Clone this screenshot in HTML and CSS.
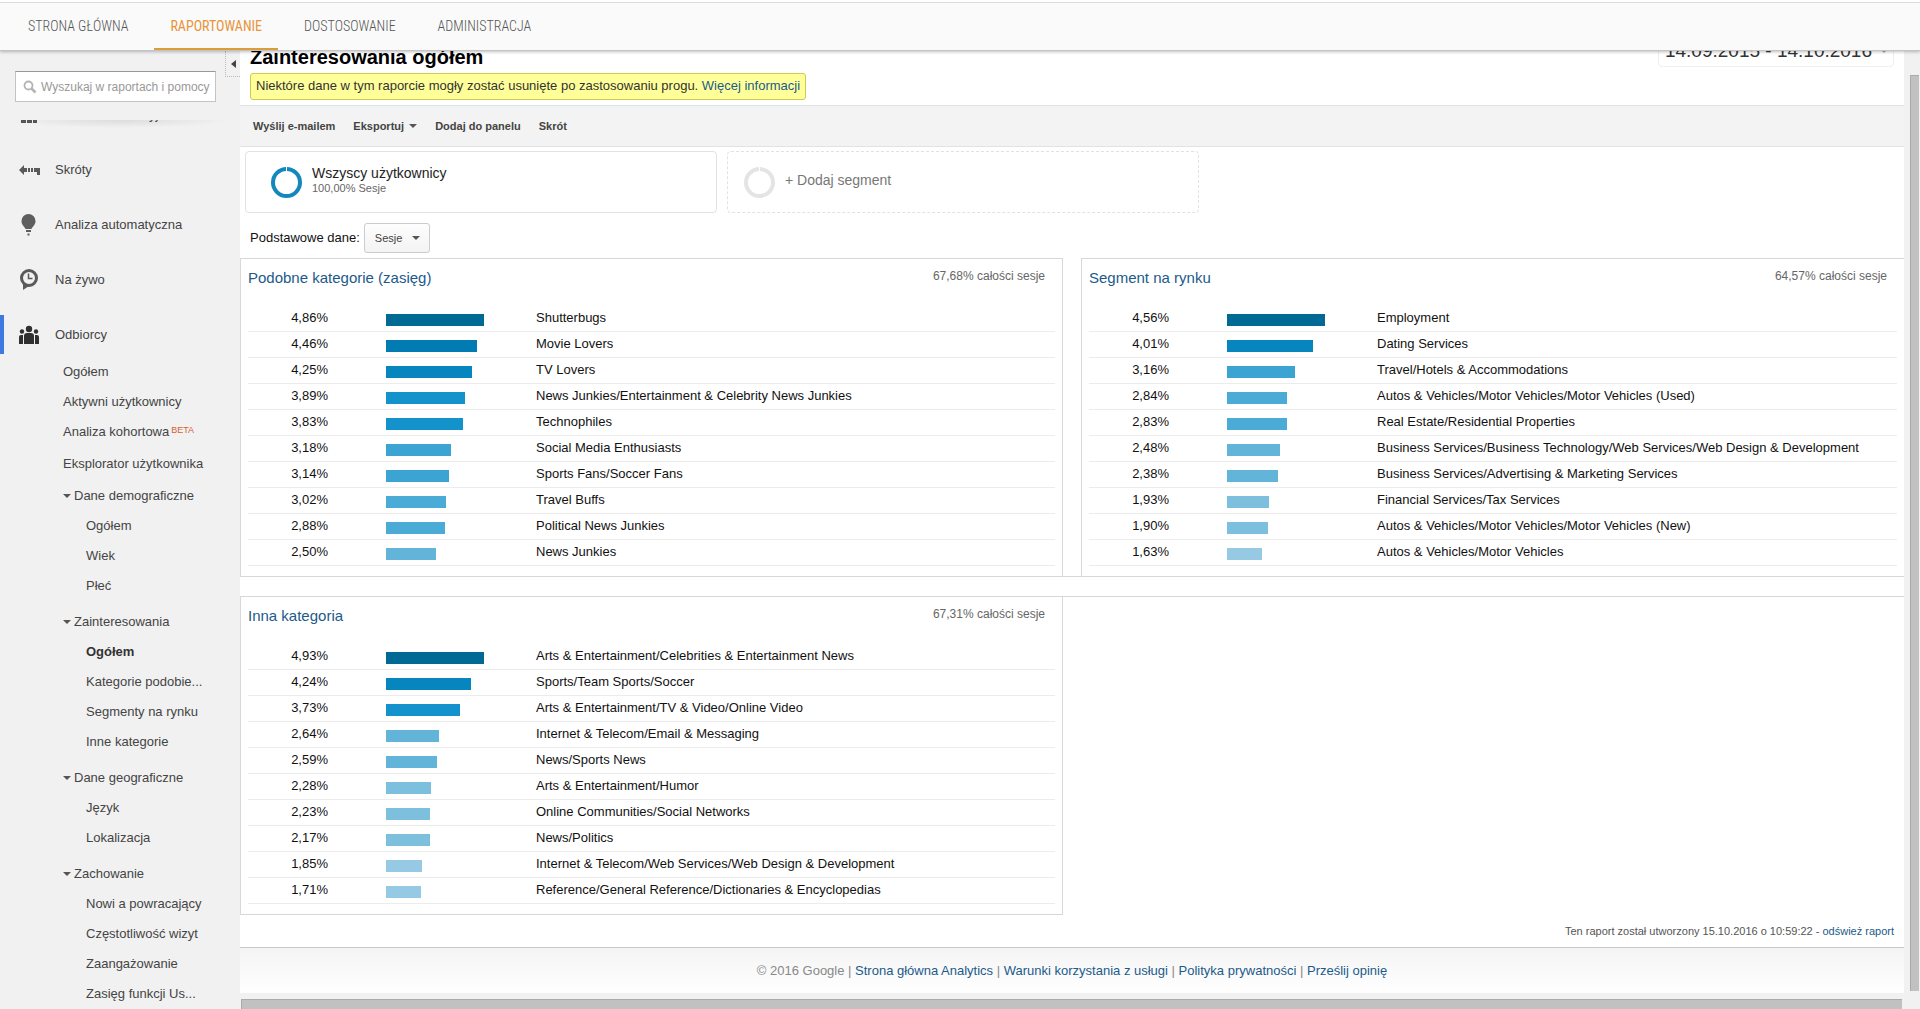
FILE: index.html
```html
<!DOCTYPE html>
<html lang="pl">
<head>
<meta charset="utf-8">
<title>Zainteresowania ogółem</title>
<link rel="stylesheet" href="styles.css">
</head>
<body>
<div class="app">
  <header class="topbar">
    <nav class="tabs">
      <a class="tab" href="#">STRONA GŁÓWNA</a>
      <a class="tab tab-active" href="#">RAPORTOWANIE</a>
      <a class="tab" href="#">DOSTOSOWANIE</a>
      <a class="tab" href="#">ADMINISTRACJA</a>
    </nav>
  </header>
  <div class="body">
    <aside class="sidebar">
      <button class="collapse" type="button" aria-label="Zwiń menu"><svg width="5" height="8" viewBox="0 0 5 8"><path d="M5 0v8L0 4z" fill="#444"/></svg></button>
      <label class="search">
        <svg width="14" height="14" viewBox="0 0 14 14" fill="none" stroke="#b4b4b4"><circle cx="5.500" cy="5.500" r="4" stroke-width="1.800"/><path d="M8.500 8.500l4 4" stroke-width="2.500"/></svg>
        <input type="text" placeholder="Wyszukaj w raportach i pomocy" aria-label="Wyszukaj w raportach i pomocy">
      </label>
      <nav class="menu">
        <a class="item" href="#"><svg width="22" height="20" viewBox="0 0 22 20" fill="#555"><path d="M2 2h5v4H2zM8 2h5v4H8zM14 2h4v4h-4zM2 8h5v4H2zM8 8h5v4H8zM14 8h4v4h-4zM2 14h5v4H2zM8 14h5v4H8zM14 14h4v4h-4z"/></svg>Panele informacyjne</a>
        <a class="item" href="#"><svg width="22" height="20" viewBox="0 0 22 20" fill="#5a5a5a"><path d="M0 10l5-5v3h3v4H5v3zM9 8h2v4H9zM12 8h2v4h-2zM15 8h6v7h-3v-3h-3z"/></svg>Skróty</a>
        <a class="item" href="#"><svg width="22" height="22" viewBox="0 0 22 22" fill="#5e5e5e"><path d="M9.500 0a7 7 0 0 1 7 7c0 4-3 5.500-4 8h-6c-1-2.500-4-4-4-8a7 7 0 0 1 7-7zM7 16h5v2H7zM8.500 19.500h2v2h-2z"/></svg>Analiza automatyczna</a>
        <a class="item" href="#"><svg width="22" height="22" viewBox="0 0 22 22"><path d="M4 14v7l6-4" fill="#5a5a5a"/><circle cx="10" cy="9" r="7.500" fill="#f1f1f1" stroke="#5a5a5a" stroke-width="3"/><path d="M9.500 4.500v5h4" fill="none" stroke="#5a5a5a" stroke-width="1.500"/></svg>Na żywo</a>
        <a class="item item-open" href="#"><svg width="22" height="20" viewBox="0 0 22 20" fill="#303030"><circle cx="10" cy="4" r="3.200"/><circle cx="3" cy="6.500" r="2.200"/><circle cx="17" cy="6.500" r="2.200"/><path d="M5 19v-8q0-3 3-3h4q3 0 3 3v8zM0 19v-7q0-2 2-2h2v9zM20 19v-7q0-2-2-2h-2v9z"/></svg>Odbiorcy</a>
        <ul class="sub">
          <li><a href="#">Ogółem</a></li>
          <li><a href="#">Aktywni użytkownicy</a></li>
          <li><a href="#">Analiza kohortowa<span class="beta">BETA</span></a></li>
          <li class="spaced"><a href="#">Eksplorator użytkownika</a></li>
        </ul>
        <a class="group group-near" href="#">Dane demograficzne</a>
        <ul class="sub leaf">
          <li><a href="#">Ogółem</a></li>
          <li><a href="#">Wiek</a></li>
          <li><a href="#">Płeć</a></li>
        </ul>
        <a class="group" href="#">Zainteresowania</a>
        <ul class="sub leaf">
          <li><a class="current" href="#">Ogółem</a></li>
          <li><a href="#">Kategorie podobie...</a></li>
          <li><a href="#">Segmenty na rynku</a></li>
          <li><a href="#">Inne kategorie</a></li>
        </ul>
        <a class="group" href="#">Dane geograficzne</a>
        <ul class="sub leaf">
          <li><a href="#">Język</a></li>
          <li><a href="#">Lokalizacja</a></li>
        </ul>
        <a class="group" href="#">Zachowanie</a>
        <ul class="sub leaf">
          <li><a href="#">Nowi a powracający</a></li>
          <li><a href="#">Częstotliwość wizyt</a></li>
          <li><a href="#">Zaangażowanie</a></li>
          <li><a href="#">Zasięg funkcji Us...</a></li>
        </ul>
      </nav>
    </aside>

    <div class="scroller">
      <main class="report">
        <div class="heading">
          <h1>Zainteresowania ogółem</h1>
          <button class="dates" type="button"><span>14.09.2015 - 14.10.2016</span><i class="caret"></i></button>
        </div>
        <p class="notice">Niektóre dane w tym raporcie mogły zostać usunięte po zastosowaniu progu. <a href="#">Więcej informacji</a></p>
        <div class="toolbar">
          <button type="button">Wyślij e-mailem</button>
          <button type="button">Eksportuj <i class="caret"></i></button>
          <button type="button">Dodaj do panelu</button>
          <button type="button">Skrót</button>
        </div>
        <div class="segments">
          <button class="segment" type="button">
            <svg width="31" height="31" viewBox="0 0 31 31"><circle cx="15.500" cy="15.500" r="13.500" fill="none" stroke="#1488bb" stroke-width="4"/><path d="M15.500 0v5" stroke="#fff"/></svg>
            <span class="segment-text"><span class="segment-name">Wszyscy użytkownicy</span><small>100,00% Sesje</small></span>
          </button>
          <button class="segment segment-add" type="button">
            <svg width="31" height="31" viewBox="0 0 31 31"><circle cx="15.500" cy="15.500" r="13.500" fill="none" stroke="#e4e4e4" stroke-width="4"/><path d="M15.500 0v5" stroke="#fff"/></svg>
            <span class="segment-text">+ Dodaj segment</span>
          </button>
        </div>
        <div class="metric">
          <label for="metric">Podstawowe dane:</label>
          <span class="picker"><select id="metric"><option>Sesje</option></select><i class="caret"></i></span>
        </div>

        <div class="panels panels-top">
          <section class="panel">
            <div class="panel-head"><h2><a href="#">Podobne kategorie (zasięg)</a></h2><span>67,68% całości sesje</span></div>
            <table>
              <tr><td>4,86%</td><td><div class="bar s1" style="width:98px"></div></td><td>Shutterbugs</td></tr>
              <tr><td>4,46%</td><td><div class="bar s2" style="width:91px"></div></td><td>Movie Lovers</td></tr>
              <tr><td>4,25%</td><td><div class="bar s3" style="width:86px"></div></td><td>TV Lovers</td></tr>
              <tr><td>3,89%</td><td><div class="bar s4" style="width:79px"></div></td><td>News Junkies/Entertainment &amp; Celebrity News Junkies</td></tr>
              <tr><td>3,83%</td><td><div class="bar s4" style="width:77px"></div></td><td>Technophiles</td></tr>
              <tr><td>3,18%</td><td><div class="bar s5" style="width:65px"></div></td><td>Social Media Enthusiasts</td></tr>
              <tr><td>3,14%</td><td><div class="bar s5" style="width:63px"></div></td><td>Sports Fans/Soccer Fans</td></tr>
              <tr><td>3,02%</td><td><div class="bar s6" style="width:60px"></div></td><td>Travel Buffs</td></tr>
              <tr><td>2,88%</td><td><div class="bar s6" style="width:59px"></div></td><td>Political News Junkies</td></tr>
              <tr><td>2,50%</td><td><div class="bar s7" style="width:50px"></div></td><td>News Junkies</td></tr>
            </table>
          </section>
          <section class="panel panel-edge">
            <div class="panel-head"><h2><a href="#">Segment na rynku</a></h2><span>64,57% całości sesje</span></div>
            <table>
              <tr><td>4,56%</td><td><div class="bar s1" style="width:98px"></div></td><td>Employment</td></tr>
              <tr><td>4,01%</td><td><div class="bar s3" style="width:86px"></div></td><td>Dating Services</td></tr>
              <tr><td>3,16%</td><td><div class="bar s5" style="width:68px"></div></td><td>Travel/Hotels &amp; Accommodations</td></tr>
              <tr><td>2,84%</td><td><div class="bar s6" style="width:60px"></div></td><td>Autos &amp; Vehicles/Motor Vehicles/Motor Vehicles (Used)</td></tr>
              <tr><td>2,83%</td><td><div class="bar s6" style="width:60px"></div></td><td>Real Estate/Residential Properties</td></tr>
              <tr><td>2,48%</td><td><div class="bar s7" style="width:53px"></div></td><td>Business Services/Business Technology/Web Services/Web Design &amp; Development</td></tr>
              <tr><td>2,38%</td><td><div class="bar s7" style="width:51px"></div></td><td>Business Services/Advertising &amp; Marketing Services</td></tr>
              <tr><td>1,93%</td><td><div class="bar s8" style="width:42px"></div></td><td>Financial Services/Tax Services</td></tr>
              <tr><td>1,90%</td><td><div class="bar s8" style="width:41px"></div></td><td>Autos &amp; Vehicles/Motor Vehicles/Motor Vehicles (New)</td></tr>
              <tr><td>1,63%</td><td><div class="bar s9" style="width:35px"></div></td><td>Autos &amp; Vehicles/Motor Vehicles</td></tr>
            </table>
          </section>
        </div>
        <div class="panels panels-bottom">
          <section class="panel panel-closed">
            <div class="panel-head"><h2><a href="#">Inna kategoria</a></h2><span>67,31% całości sesje</span></div>
            <table>
              <tr><td>4,93%</td><td><div class="bar s1" style="width:98px"></div></td><td>Arts &amp; Entertainment/Celebrities &amp; Entertainment News</td></tr>
              <tr><td>4,24%</td><td><div class="bar s3" style="width:85px"></div></td><td>Sports/Team Sports/Soccer</td></tr>
              <tr><td>3,73%</td><td><div class="bar s4" style="width:74px"></div></td><td>Arts &amp; Entertainment/TV &amp; Video/Online Video</td></tr>
              <tr><td>2,64%</td><td><div class="bar s7" style="width:53px"></div></td><td>Internet &amp; Telecom/Email &amp; Messaging</td></tr>
              <tr><td>2,59%</td><td><div class="bar s7" style="width:51px"></div></td><td>News/Sports News</td></tr>
              <tr><td>2,28%</td><td><div class="bar s8" style="width:45px"></div></td><td>Arts &amp; Entertainment/Humor</td></tr>
              <tr><td>2,23%</td><td><div class="bar s8" style="width:44px"></div></td><td>Online Communities/Social Networks</td></tr>
              <tr><td>2,17%</td><td><div class="bar s8" style="width:44px"></div></td><td>News/Politics</td></tr>
              <tr><td>1,85%</td><td><div class="bar s9" style="width:36px"></div></td><td>Internet &amp; Telecom/Web Services/Web Design &amp; Development</td></tr>
              <tr><td>1,71%</td><td><div class="bar s9" style="width:35px"></div></td><td>Reference/General Reference/Dictionaries &amp; Encyclopedias</td></tr>
            </table>
          </section>
        </div>
        <p class="generated">Ten raport został utworzony 15.10.2016 o 10:59:22 - <a href="#">odśwież raport</a></p>
        <footer class="footer">© 2016 Google | <a href="#">Strona główna Analytics</a> | <a href="#">Warunki korzystania z usługi</a> | <a href="#">Polityka prywatności</a> | <a href="#">Prześlij opinię</a></footer>
      </main>
      <div class="track-v"><div class="thumb"></div></div>
      <div class="track-h"><div class="thumb"></div></div>
    </div>
  </div>
</div>
</body>
</html>
```
FILE: styles.css
```css
* { box-sizing: border-box; }

body {
  margin: 0;
  font: 13px/18px "Liberation Sans", Arial, sans-serif;
  color: #111;
  background: #f1f1f1;
}

a { color: #1c5a8a; text-decoration: none; }

button {
  padding: 0;
  border: 0;
  background: none;
  font: inherit;
  color: inherit;
}

.app {
  display: flex;
  flex-direction: column;
  height: 100vh;
  overflow: hidden;
}

.caret {
  display: inline-block;
  border: 4px solid transparent;
  border-top-color: #555;
  border-bottom: 0;
}

/* Top navigation */
.topbar {
  position: relative;
  z-index: 2;
  flex: none;
  height: 51px;
  padding: 0 12px;
  border-top: 2px solid #fff;
  border-bottom: 1px solid #c4c4c4;
  background: #fafafa;
  box-shadow: inset 0 1px #dcdcdc, 0 1px 3px rgba(0, 0, 0, .25);
}

.tabs { display: flex; gap: 10px; height: 100%; }

.tab {
  padding: 0 16px;
  border-bottom: 2px solid transparent;
  font: 300 14px/48px "Roboto Condensed", Roboto, sans-serif;
  color: #555;
}

.tab-active { border-color: #dc9c3c; font-weight: 400; color: #e8943a; }

.body { display: flex; flex: 1; min-height: 0; }

/* Sidebar */
.sidebar {
  position: relative;
  display: flex;
  flex-direction: column;
  width: 240px;
  flex: none;
  padding-top: 20px;
  background: #f1f1f1;
}

.collapse {
  position: absolute;
  top: 0;
  right: 0;
  display: grid;
  place-items: center;
  width: 15px;
  height: 26px;
  border: 1px dotted #bbb;
  border-width: 0 0 1px 1px;
}

.search {
  display: flex;
  align-items: center;
  gap: 4px;
  flex: none;
  height: 31px;
  margin: 0 24px 0 15px;
  padding-left: 7px;
  border: 1px solid #c4c4c4;
  border-top-color: #999;
  background: #fff;
}

.search svg { flex: none; }

.search input {
  flex: 1;
  min-width: 0;
  padding: 0;
  border: 0;
  outline: 0;
  background: none;
  font: 12px "Liberation Sans", Arial, sans-serif;
}

.search input::placeholder { color: #999; }

.menu {
  flex: 1;
  min-height: 0;
  margin-top: 18px;
  overflow: hidden;
  background: radial-gradient(ellipse 110px 8px at 50% 0, #dcdcdc, #f1f1f1);
}

.menu a { color: #444; }

.item {
  display: flex;
  align-items: center;
  gap: 14px;
  height: 39px;
  margin-bottom: 16px;
  padding-left: 19px;
}

.item:first-child { margin-top: -25px; }

.item-open {
  margin-bottom: 3px;
  padding-left: 15px;
  border-left: 4px solid #3f78e0;
}

.sub { margin: 0; padding: 0 0 0 63px; list-style: none; }
.sub li { line-height: 30px; }
.sub.leaf { padding-left: 86px; }
.sub .spaced { margin-top: 2px; }
.sub .current { font-weight: bold; color: #333; }

.beta { margin-left: 2px; font-size: 9px; vertical-align: 3px; color: #d8602c; line-height: 1; }

.group {
  display: flex;
  align-items: center;
  gap: 3px;
  height: 30px;
  margin-top: 6px;
  padding-left: 63px;
}

.group::before {
  content: "";
  border: 4px solid transparent;
  border-top-color: #555;
  border-bottom: 0;
}

.group-near { margin-top: 2px; }

/* Report area with its scroll tracks */
.scroller {
  display: grid;
  grid-template: minmax(0, 1fr) 16px / minmax(0, 1fr) 16px;
  flex: 1;
  min-width: 0;
}

.report { display: flex; flex-direction: column; overflow: hidden; background: #fff; }

.track-v { padding: 24px 1px 2px 6px; }
.track-h { padding: 6px 2px 0 1px; }
.thumb { height: 100%; background: #c1c1c1; box-shadow: inset 1px 1px #aaa; }

.heading {
  display: flex;
  justify-content: space-between;
  align-items: flex-end;
  height: 38px;
  margin-top: -22px;
  padding: 0 10px;
  flex: none;
}

h1 { margin: 0; font-size: 20px; line-height: 20px; color: #000; }

.dates {
  display: flex;
  align-items: center;
  height: 32px;
  padding-left: 6px;
  border: 1px solid #eee;
  border-radius: 4px;
  font-size: 19px;
  color: #333;
}

.dates .caret { margin: 0 5px 0 8px; border-top-color: #aaa; }

.notice {
  align-self: flex-start;
  margin: 6px 10px 5px;
  padding: 3px 5px 4px;
  border: 1px solid #cccc55;
  border-radius: 3px;
  background: #ffff99;
  color: #333;
}

.toolbar {
  display: flex;
  align-items: center;
  gap: 18px;
  flex: none;
  height: 42px;
  padding-left: 13px;
  border: 1px solid #e2e2e2;
  border-width: 1px 0;
  background: #f3f3f3;
  font-size: 11px;
  font-weight: bold;
  color: #444;
}

.toolbar .caret { margin: 0 0 2px 2px; }

.segments { display: flex; gap: 10px; padding: 4px 5px 0; }

.segment {
  display: flex;
  align-items: center;
  gap: 10px;
  flex: 0 1 472px;
  height: 62px;
  padding-left: 25px;
  border: 1px solid #e2e2e2;
  border-radius: 4px;
  font-size: 14px;
  line-height: 16px;
  text-align: left;
  color: #222;
}

.segment-text { padding-bottom: 4px; }
.segment-name, .segment small { display: block; }
.segment small { font-size: 11px; line-height: 14px; color: #666; }
.segment-add { padding-left: 16px; border-style: dashed; color: #777; }

.metric { display: flex; align-items: center; gap: 4px; padding: 10px 10px 5px; }

.picker { position: relative; display: flex; align-items: center; }

.picker select {
  appearance: none;
  width: 66px;
  height: 30px;
  padding: 0 10px;
  border: 1px solid #ccc;
  border-radius: 3px;
  background: linear-gradient(#fdfdfd, #f3f3f3);
  font: 11px "Liberation Sans", Arial, sans-serif;
  color: #444;
}

.picker .caret { position: absolute; right: 10px; pointer-events: none; }

/* Panels */
.panels {
  display: grid;
  grid-template-columns: repeat(2, minmax(0, 1fr));
  gap: 18px;
}

.panels-top { border-bottom: 1px solid #d8d8d8; }
.panels-bottom { margin-top: 19px; border-top: 1px solid #d8d8d8; }

.panel {
  padding: 0 7px 10px;
  border: 1px solid #d8d8d8;
  border-bottom: 0;
}

.panel-edge { border-right: 0; }
.panel-closed { border-top: 0; border-bottom: 1px solid #d8d8d8; }

.panel-head {
  display: flex;
  justify-content: space-between;
  height: 47px;
  padding: 8px 10px 0 0;
  font-size: 12px;
  color: #666;
}

h2 { margin: 0; font-size: 15px; line-height: 22px; font-weight: normal; }

table { width: 100%; border-spacing: 0; table-layout: fixed; }

td {
  height: 26px;
  padding: 0 0 2px;
  border-bottom: 1px solid #ececec;
  white-space: nowrap;
}

td:first-child { width: 80px; text-align: right; }
td:nth-child(2) { width: 208px; padding: 2px 0 0 58px; }

.bar { height: 12px; }
.s1 { background: #006a94; }
.s2 { background: #007cb2; }
.s3 { background: #0785be; }
.s4 { background: #1492cc; }
.s5 { background: #3ba4d3; }
.s6 { background: #4aabd6; }
.s7 { background: #62b4d8; }
.s8 { background: #7cc0de; }
.s9 { background: #96cae4; }

.generated {
  margin: 7px 10px 7px auto;
  font-size: 11px;
  color: #555;
}

.footer {
  flex: 1;
  padding-top: 14px;
  border-top: 1px solid #c8c8c8;
  background: linear-gradient(#f4f4f4, #fff);
  text-align: center;
  color: #888;
}
```
